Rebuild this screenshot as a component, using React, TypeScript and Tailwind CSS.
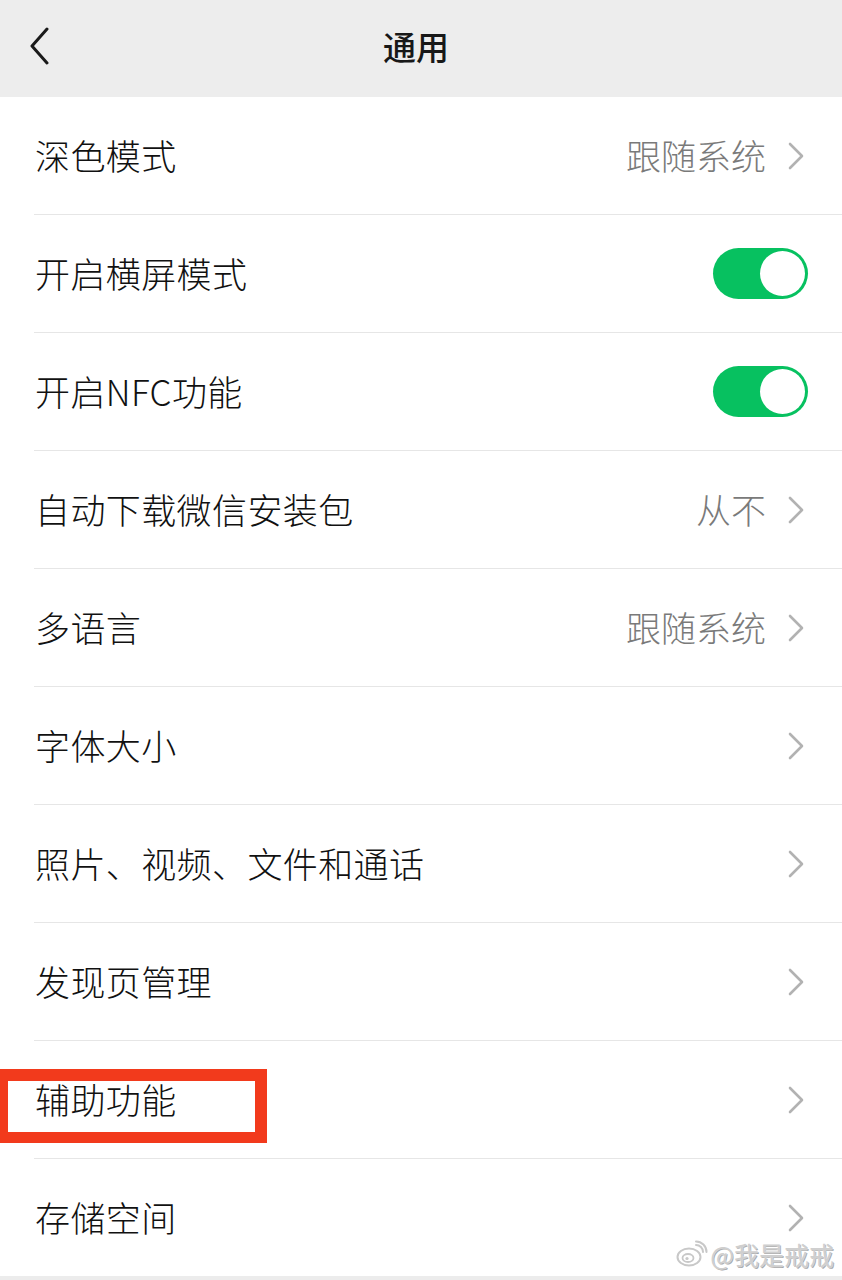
import React from "react";

type Row = { label: string; value?: string; toggle?: boolean; highlight?: boolean };

const rows: Row[] = [
  { label: "深色模式", value: "跟随系统" },
  { label: "开启横屏模式", toggle: true },
  { label: "开启NFC功能", toggle: true },
  { label: "自动下载微信安装包", value: "从不" },
  { label: "多语言", value: "跟随系统" },
  { label: "字体大小" },
  { label: "照片、视频、文件和通话" },
  { label: "发现页管理" },
  { label: "辅助功能", highlight: true },
  { label: "存储空间" },
];

function Chevron() {
  return (
    <svg width="16" height="28" viewBox="0 0 16 28" className="shrink-0">
      <path d="M2 2 L14 14 L2 26" fill="none" stroke="#b2b2b2" strokeWidth="2.6" strokeLinecap="round" strokeLinejoin="round" />
    </svg>
  );
}

function Toggle() {
  return (
    <div className="w-[95px] h-[51px] rounded-full bg-[#07c160] flex items-center justify-end pr-[3px] mr-[34px]">
      <div className="w-[45px] h-[45px] rounded-full bg-white" />
    </div>
  );
}

function WeiboLogo() {
  return (
    <svg width="32" height="28" viewBox="0 0 32 28">
      <ellipse cx="13" cy="17" rx="11.5" ry="8.5" fill="none" stroke="#c8c8c8" strokeWidth="2" />
      <ellipse cx="12" cy="18" rx="5.5" ry="4" fill="none" stroke="#c8c8c8" strokeWidth="1.8" />
      <circle cx="11" cy="18.5" r="1.6" fill="#c8c8c8" />
      <path d="M20 5 A7 7 0 0 1 27 12" fill="none" stroke="#c8c8c8" strokeWidth="2" strokeLinecap="round" />
      <path d="M20 1.5 A10.5 10.5 0 0 1 30.5 12" fill="none" stroke="#c8c8c8" strokeWidth="2" strokeLinecap="round" />
    </svg>
  );
}

export default function App() {
  return (
    <div
      className="relative w-[842px] h-[1280px] bg-white overflow-hidden"
      style={{ fontFamily: '"Noto Sans CJK SC", "Noto Sans", sans-serif' }}
    >
      <div className="relative h-[97px] bg-[#ededed] flex items-center justify-center">
        <svg width="24" height="40" viewBox="0 0 24 40" className="absolute left-[28px] top-[27px]">
          <path d="M19 2 L4 19 L19 36" fill="none" stroke="#1a1a1a" strokeWidth="3" strokeLinecap="round" strokeLinejoin="round" />
        </svg>
        <span className="text-[33px] font-medium text-[#181818] leading-none -mt-[4px] -ml-[10px]">通用</span>
      </div>
      <div className="flex flex-col">
        {rows.map((r, i) => (
          <div key={r.label} className={i === 0 ? "" : "pl-[34px]"}>
            <div
              className={
                "relative flex items-center justify-between " +
                (i === 0 ? "h-[117px] pl-[34px]" : "h-[118px] border-t border-[#e6e6e6]")
              }
            >
              <span className="text-[35px] font-light tracking-[0.4px] text-[#111111] leading-none -mt-[2px] ml-[1px]">{r.label}</span>
              {r.toggle ? (
                <Toggle />
              ) : (
                <div className="flex items-center gap-[22px] pr-[38px]">
                  {r.value && <span className="text-[35px] font-light text-[#7a7a7a] leading-none -mt-[2px]">{r.value}</span>}
                  <Chevron />
                </div>
              )}
            </div>
          </div>
        ))}
      </div>
      <div className="h-[4px] bg-[#ececec]" />
      <div className="absolute left-0 top-[1069px] w-[267px] h-[74px] border-[#f23a1c] border-t-[12px] border-b-[11px] border-l-[8px] border-r-[12px]" />
      <div className="absolute right-[8px] top-[1240px] flex items-center gap-[2px]">
        <WeiboLogo />
        <span
          className="text-[25px] text-[#cfcfcf] leading-none"
          style={{ textShadow: "0 0 2px #fff, 1px 1px 0 #9a9a9a" }}
        >
          @我是戒戒
        </span>
      </div>
    </div>
  );
}
